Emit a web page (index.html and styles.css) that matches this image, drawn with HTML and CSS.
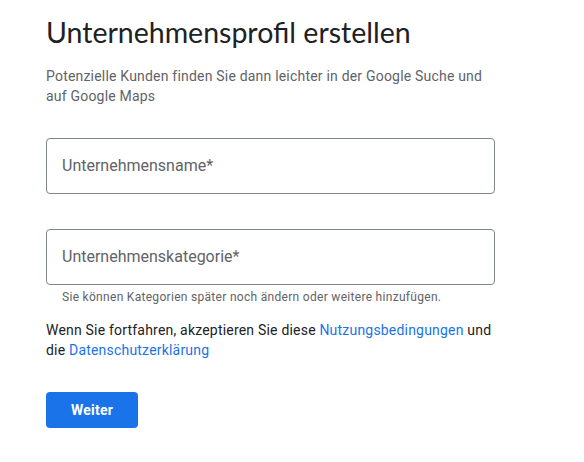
FILE: index.html
```html
<!DOCTYPE html>
<html lang="de">
<head>
<meta charset="utf-8">
<title>Unternehmensprofil erstellen</title>
<link rel="stylesheet" href="styles.css">
</head>
<body>
<main class="page">
  <h1 class="title">Unternehmensprofil erstellen</h1>
  <p class="subtitle">Potenzielle Kunden finden Sie dann leichter in der Google Suche und auf Google Maps</p>
  <div class="field field-first">
    <span class="field-label">Unternehmensname*</span>
  </div>
  <div class="field field-second">
    <span class="field-label">Unternehmenskategorie*</span>
  </div>
  <p class="helper">Sie können Kategorien später noch ändern oder weitere hinzufügen.</p>
  <p class="terms">Wenn Sie fortfahren, akzeptieren Sie diese <a class="link" href="#">Nutzungsbedingungen</a> und die <a class="link" href="#">Datenschutzerklärung</a></p>
  <button class="btn" type="button">Weiter</button>
</main>
</body>
</html>
```
FILE: styles.css
```css
html, body {
  margin: 0;
  padding: 0;
  background: #ffffff;
}
body {
  font-family: Roboto, "Liberation Sans", Arial, sans-serif;
  color: #202124;
}
.page {
  width: 449px;
  padding: 14px 0 0 46px;
  display: flex;
  flex-direction: column;
  align-items: flex-start;
}
.title {
  margin: 0;
  font-family: Lato, Roboto, sans-serif;
  font-weight: 400;
  font-size: 28.5px;
  line-height: 36px;
  color: #202124;
  letter-spacing: 0;
}
.subtitle {
  margin: 16px 0 0;
  font-size: 14px;
  line-height: 20px;
  letter-spacing: 0.2px;
  color: #5f6368;
  width: 449px;
}
.field {
  box-sizing: border-box;
  width: 449px;
  height: 56px;
  border: 1px solid #80868b;
  border-radius: 4px;
  display: flex;
  align-items: center;
  padding: 0 15px;
}
.field-first { margin-top: 32px; }
.field-second { margin-top: 35px; }
.field-label {
  font-size: 16px;
  line-height: 24px;
  color: #5f6368;
}
.helper {
  margin: 4px 0 0;
  padding-left: 16px;
  font-size: 12px;
  line-height: 16px;
  letter-spacing: 0.3px;
  color: #5f6368;
}
.terms {
  margin: 15px 0 0;
  font-size: 14px;
  line-height: 20px;
  letter-spacing: 0.2px;
  color: #202124;
  width: 449px;
}
.link {
  color: #1a73e8;
  text-decoration: none;
}
.btn {
  margin-top: 32px;
  min-width: 92px;
  height: 36px;
  padding: 0 24px;
  border: none;
  border-radius: 4px;
  background: #1a73e8;
  color: #ffffff;
  font-family: Roboto, "Liberation Sans", Arial, sans-serif;
  font-weight: 700;
  font-size: 14px;
  letter-spacing: 0.25px;
}
```
